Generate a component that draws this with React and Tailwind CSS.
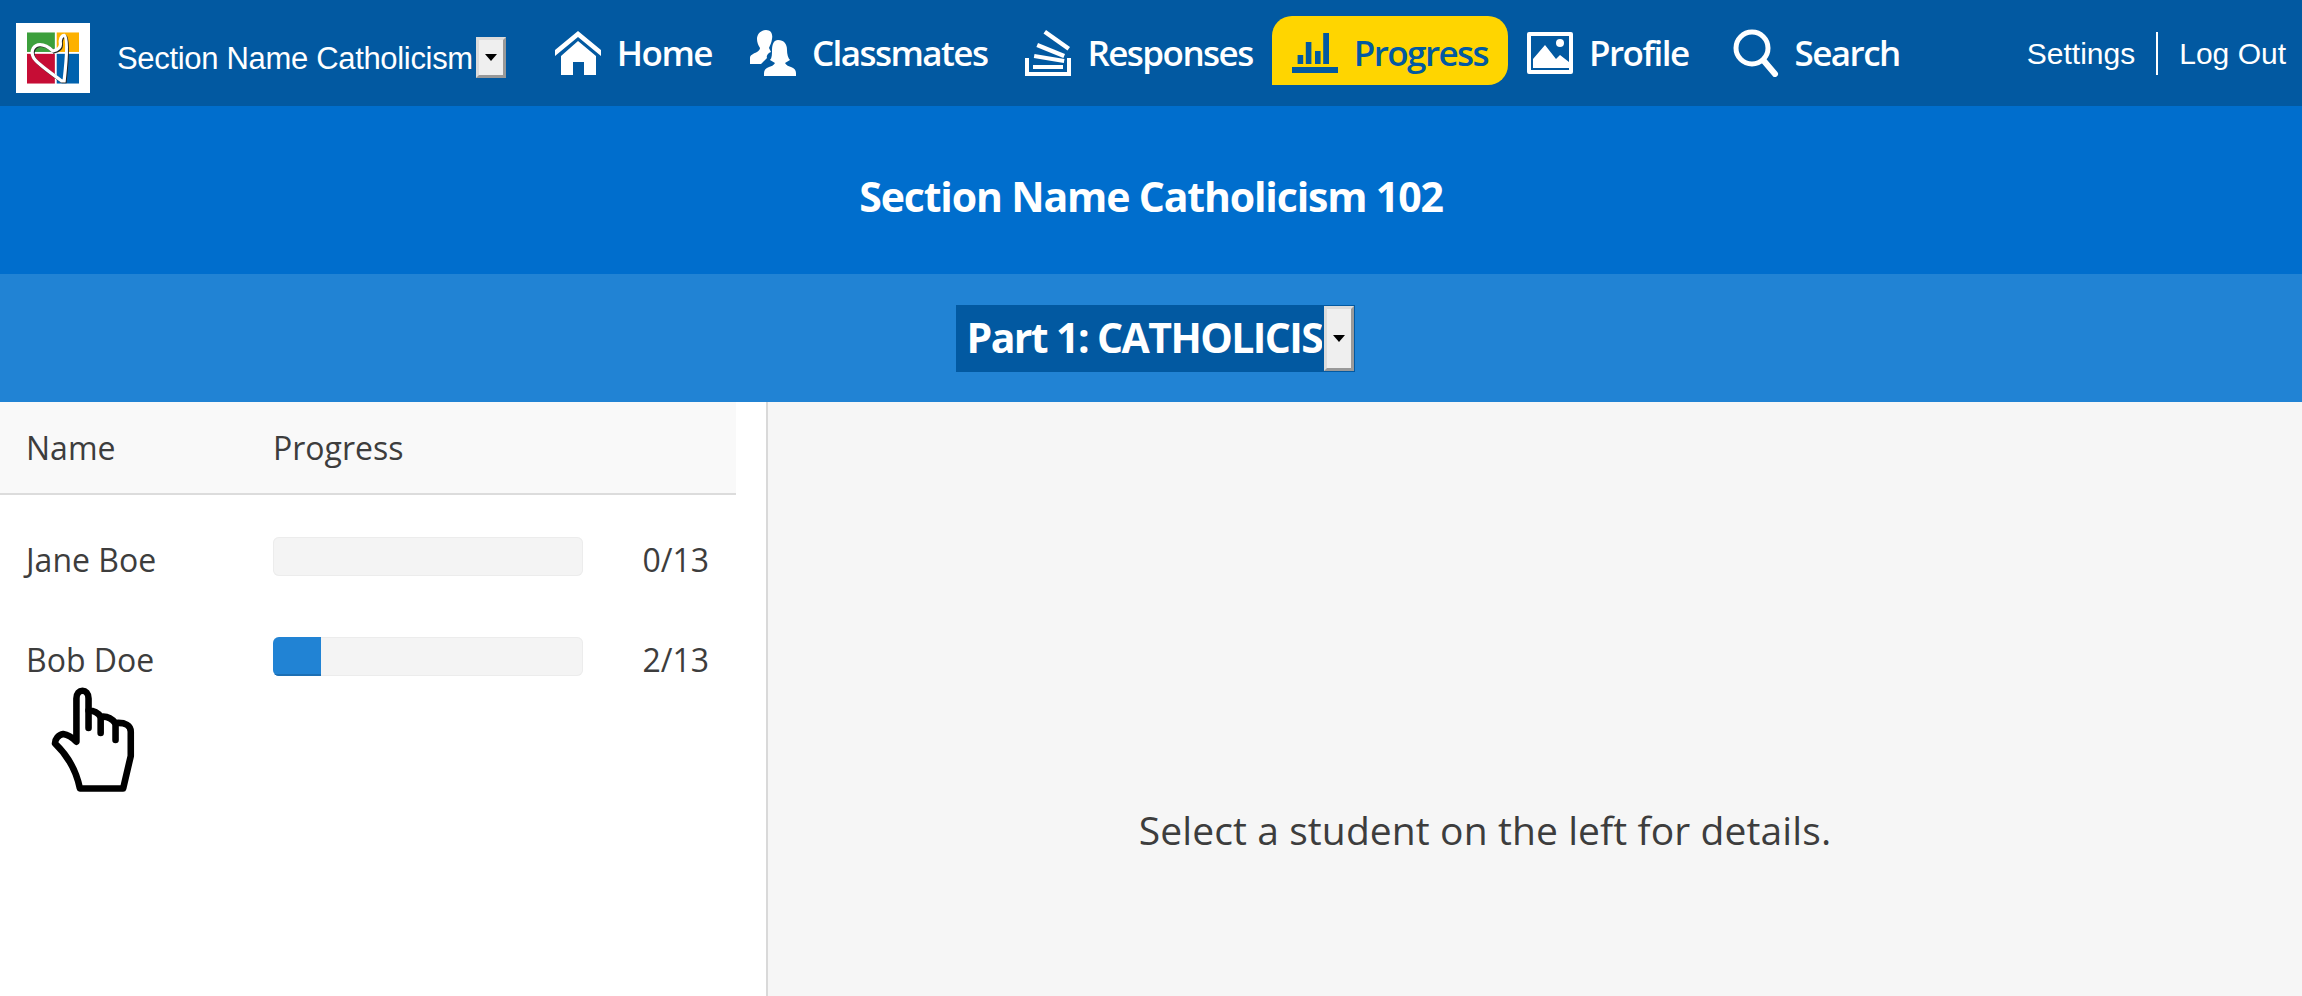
import React from 'react';

const sans = "font-['Open_Sans',sans-serif] font-stretch-[88%]";

const HomeIcon = () => (
  <svg viewBox="0 0 46 44" className="w-[46px] h-[44px]" fill="currentColor">
    <path d="M23 0 46 19v6L23 6 0 25v-6z" />
    <path d="M23 10 41 25v19H29V31H18v13H6V25z" />
  </svg>
);

const ClassmatesIcon = () => (
  <svg viewBox="0 0 46 46" className="w-[46px] h-[46px]" fill="currentColor">
    <path d="M16 0c5 0 7 4 6 9-.5 4-2 6-3 9l2 4c-3 1-5 4-4 6l-3 3-3 3H0v-6c0-3 3-4 7-6 2-1 3-3 3-4-2-3-3-6-3-9C7 4 11 0 16 0z" />
    <path d="M28 10c6 0 9 4 9 10 0 4 1 8 3 10l-5 3c1 2 3 3 6 4 3 1 5 3 5 6v3H14v-3c0-3 2-5 5-6 3-1 5-2 6-4l-5-3c2-2 2-6 2-10 0-6 2-10 6-10z" />
  </svg>
);

const ResponsesIcon = () => (
  <svg viewBox="0 0 46 46" className="w-[46px] h-[46px]" fill="currentColor">
    <path d="M0 28h4v14h38V28h4v18H0z" />
    <path d="M8 35h30v4H8z" />
    <path d="M9.500 24l30 5-.7 4-30-5z" />
    <path d="M13 13l27 11-1.600 4-27-11z" />
    <path d="M21 0l24 17-2.500 3.500-24-17z" />
  </svg>
);

const ProgressIcon = () => (
  <svg viewBox="0 0 46 40" className="w-[46px] h-[40px]" fill="currentColor">
    <path d="M0 34h46v6H0zM5.600 22h5.600v9H5.600zM13.800 9h5.600v22h-5.600zM23 18h5.600v13H23zM31.200 0H37v31h-5.800z" />
  </svg>
);

const ProfileIcon = () => (
  <svg viewBox="0 0 46 42" className="w-[46px] h-[42px]" fill="currentColor">
    <path fillRule="evenodd" d="M2 0h42a2 2 0 0 1 2 2v38a2 2 0 0 1-2 2H2a2 2 0 0 1-2-2V2a2 2 0 0 1 2-2zm2 4v34h38V4z" />
    <circle cx="33" cy="11" r="4" />
    <path d="M6 36v-9l12-14 11 14 4-4 9 7v6z" />
  </svg>
);

const SearchIcon = () => (
  <svg viewBox="0 0 46 48" className="w-[46px] h-[48px]" fill="none" stroke="currentColor">
    <circle cx="19" cy="19" r="16" strokeWidth="5" />
    <path d="M31 32 42 45" strokeWidth="6" strokeLinecap="round" />
  </svg>
);

const HandCursor = () => (
  <svg viewBox="60 50 260 320" className="w-[90px] h-[112px]" fill="#fff" stroke="#000" strokeWidth="19" strokeLinejoin="round" strokeLinecap="round">
    <path d="M145 215V90c0-30 35-30 35 0v35c12 0 26 4 35 18 14-2 30 2 42 18 30-3 45 8 45 25v70l-22 94H155c-8-40-30-90-72-130 0-12 10-25 24-27 14 2 28 12 38 22z" />
    <path d="M180 125v50M215 145v45M258 162v48" fill="none" />
  </svg>
);

const Logo = () => (
  <div className="mt-[9px] w-[74px] h-[70px] bg-white flex items-center justify-center">
    <svg viewBox="0 0 56 55" className="w-[52px] h-[52px]">
      <path d="M0 0h30v21H0z" fill="#3c9f3c" />
      <path d="M32 0h24v21H32z" fill="#fdb100" />
      <path d="M0 23h30v32H0z" fill="#c60d35" />
      <path d="M32 23h24v32H32z" fill="#0062ae" />
      <path d="M38 53C26 44 11 34 8 28 4 20 9 14 15 14c6 0 10 3 14 7 4-1 8-3 8-7-1-5 1-10 4-10 4 2 3 22 0 49z" fill="none" stroke="#222" strokeWidth="3.500" />
      <path d="M37 52C25 43 10 33 7 27 3 19 8 13 14 13c6 0 10 3 14 7 4-1 8-3 8-7-1-5 1-10 4-10 4 2 3 22 0 49z" fill="none" stroke="#fff" strokeWidth="3.500" />
    </svg>
  </div>
);

const SelectArrow = ({ className }) => (
  <div className={`${className} shrink-0 flex items-center justify-center bg-[#efefef] border-[3px] border-t-[#dcdcdc] border-l-[#dcdcdc] border-r-[#999999] border-b-[#999999]`}>
    <div className="w-0 h-0 border-x-[6px] border-x-transparent border-t-[7px] border-t-black" />
  </div>
);

const navItems = [
  { name: 'Home', icon: HomeIcon, cls: 'px-[19px]' },
  { name: 'Classmates', icon: ClassmatesIcon, cls: 'px-[19px]' },
  { name: 'Responses', icon: ResponsesIcon, cls: 'px-[19px]' },
  { name: 'Progress', icon: ProgressIcon, cls: 'px-[20px] bg-[#ffd500] text-[#0259a1] rounded-t-[20px] rounded-br-[20px]' },
  { name: 'Profile', icon: ProfileIcon, cls: 'px-[19px]' },
  { name: 'Search', icon: SearchIcon, cls: 'px-[19px] ml-[6px]' },
];

const students = [
  { name: 'Jane Boe', done: 0 },
  { name: 'Bob Doe', done: 2 },
];

export default function App() {
  return (
    <div className={`h-[996px] w-full overflow-hidden flex flex-col bg-white text-[#3d3d3d] ${sans}`}>
      {/* Top nav */}
      <nav className="h-[106px] shrink-0 bg-[#0259a1] text-white flex items-center pl-[16px] pr-[16px]">
        <Logo />
        <span className="mt-[12px] ml-[27px] font-['Liberation_Sans',sans-serif] font-stretch-normal text-[31px] tracking-[-0.32px] whitespace-nowrap">Section Name Catholicism</span>
        <SelectArrow className="mt-[9px] ml-[3px] w-[30px] h-[41px]" />
        <ul className="-mt-[6px] ml-[30px] flex items-center">
          {navItems.map((item) => {
            const Icon = item.icon;
            return (
              <li
                key={item.name}
                className={`h-[69px] pt-[6px] flex items-center gap-[16px] text-[35px] font-semibold tracking-[-1.55px] whitespace-nowrap ${item.cls}`}
              >
                <Icon />
                <span>{item.name}</span>
              </li>
            );
          })}
        </ul>
        <div className="ml-auto flex items-center font-['Liberation_Sans',sans-serif] font-stretch-normal text-[30px] whitespace-nowrap">
          <span>Settings</span>
          <span className="mx-[21px] w-[2px] h-[43px] bg-white" />
          <span>Log Out</span>
        </div>
      </nav>

      {/* Section title */}
      <header className="h-[168px] shrink-0 bg-[#006ecd] text-white flex items-center justify-center pt-[14px] text-[41px] font-bold tracking-[-1.15px]">
        Section Name Catholicism 102
      </header>

      {/* Part select */}
      <div className="h-[128px] shrink-0 bg-[#2183d4] flex items-center justify-center">
        <div className="ml-[8px] w-[399px] h-[67px] bg-[#0259a1] text-white flex items-center justify-between pl-[11px] pr-[1px] text-[41px] font-bold tracking-[-1.6px] whitespace-nowrap overflow-hidden">
          <span className="w-[355px] overflow-hidden">Part 1: CATHOLICISM</span>
          <SelectArrow className="w-[30px] h-[65px]" />
        </div>
      </div>

      <div className="flex-1 flex min-h-0">
        {/* Student list */}
        <aside className="w-[768px] shrink-0 border-r-2 border-[#d9d9d9] pr-[30px] text-[32px]">
          <div className="h-[93px] bg-[#f9f9f9] border-b-2 border-[#dcdcdc] flex items-center pl-[26px]">
            <span className="w-[247px]">Name</span>
            <span>Progress</span>
          </div>
          <ul className="pt-[11px]">
            {students.map((s) => (
              <li key={s.name} className="h-[100px] flex items-center pl-[26px] pr-[27px]">
                <span className="mt-[8px] w-[247px]">{s.name}</span>
                <div className="w-[310px] h-[39px] rounded-[6px] bg-[#f4f4f4] shadow-[inset_0_0_0_1px_#ececec] overflow-hidden">
                  <div className="h-full bg-[#2183d4] border-b-2 border-[#1c6fb4]" style={{ width: `${(s.done / 13) * 100}%` }} />
                </div>
                <span className="mt-[8px] ml-auto">{s.done}/13</span>
              </li>
            ))}
          </ul>
          <div className="-mt-[22px] ml-[47px] w-[90px]">
            <HandCursor />
          </div>
        </aside>

        {/* Details */}
        <main className="flex-1 bg-[#f6f6f6] flex justify-center pt-[399px] pr-[100px] text-[39px] tracking-[0.1px]">
          <p>Select a student on the left for details.</p>
        </main>
      </div>
    </div>
  );
}
